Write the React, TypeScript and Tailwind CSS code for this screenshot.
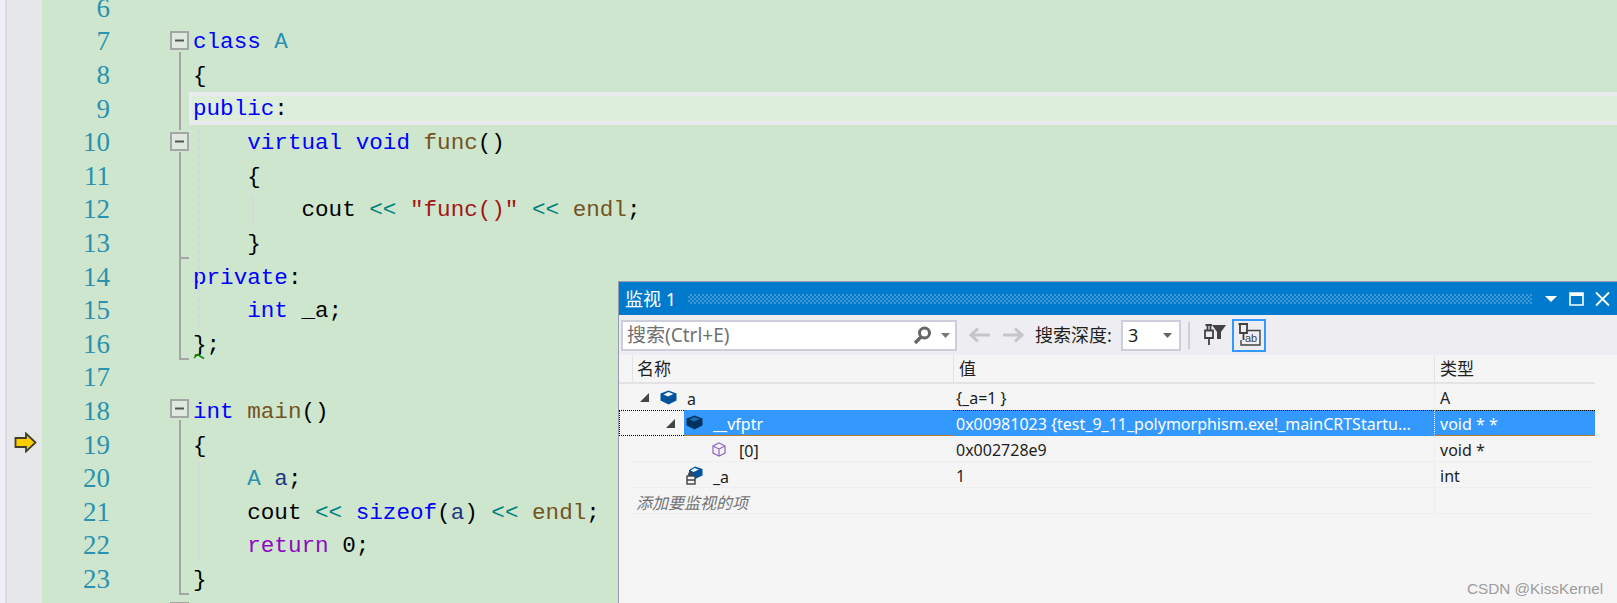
import React from "react";

const K = ({ children }: { children: React.ReactNode }) => <span className="text-[#0000ff]">{children}</span>;
const T = ({ children }: { children: React.ReactNode }) => <span className="text-[#2b91af]">{children}</span>;
const F = ({ children }: { children: React.ReactNode }) => <span className="text-[#74531f]">{children}</span>;
const O = ({ children }: { children: React.ReactNode }) => <span className="text-[#008080]">{children}</span>;
const V = ({ children }: { children: React.ReactNode }) => <span className="text-[#1f377f]">{children}</span>;

const lines: [number, React.ReactNode][] = [
  [6, ""],
  [7, <><K>class</K> <T>A</T></>],
  [8, "{"],
  [9, <><K>public</K>:</>],
  [10, <>    <K>virtual</K> <K>void</K> <F>func</F>()</>],
  [11, "    {"],
  [12, <>        cout <O>&lt;&lt;</O> <span className="text-[#a31515]">"func()"</span> <O>&lt;&lt;</O> <F>endl</F>;</>],
  [13, "    }"],
  [14, <><K>private</K>:</>],
  [15, <>    <K>int</K> _a;</>],
  [16, "};"],
  [17, ""],
  [18, <><K>int</K> <F>main</F>()</>],
  [19, "{"],
  [20, <>    <T>A</T> <V>a</V>;</>],
  [21, <>    cout <O>&lt;&lt;</O> <K>sizeof</K>(<V>a</V>) <O>&lt;&lt;</O> <F>endl</F>;</>],
  [22, <>    <span className="text-[#8f08c4]">return</span> 0;</>],
  [23, "}"],
  [24, <span className="text-[#008000]">// l    t</span>],
];

function FoldBox({ y }: { y: number }) {
  return (
    <g>
      <rect x={171} y={y} width={17} height={17} fill="#dfe9e0" stroke="#a5a5a5" strokeWidth={2} />
      <path d={`M175 ${y + 8.5}H184`} stroke="#555" strokeWidth={2} />
    </g>
  );
}

function Guides() {
  return (
    <svg className="absolute left-0 top-0" width={1617} height={603} fill="none">
      <path d="M180 52V130M180 152V359H189M180 258H189M180 420V594H189" stroke="#a5a5a5" strokeWidth={2} />
      <path d="M199 129V325M199 463V560M253 197V226" stroke="#d6d6e2" strokeWidth={2} strokeDasharray="5 3" />
      <path d="M194 358L197.5 354.5L204 358.5" stroke="#108a10" strokeWidth={1.6} />
      <FoldBox y={32} />
      <FoldBox y={133} />
      <FoldBox y={400} />
      <FoldBox y={603} />
    </svg>
  );
}

function Box({ dark }: { dark?: boolean }) {
  return (
    <svg width={17} height={15} viewBox="0 0 17 15" className="shrink-0">
      <path d="M8.5 0.5L16.5 3.5V10.5L8.5 14.5L0.5 10.5V3.5Z" fill={dark ? "#00335f" : "#00539c"} />
      <path d="M8.5 2L13.5 4L8 6.5L3.5 4.5Z" fill={dark ? "#1c6fb5" : "#f3f6fb"} />
    </svg>
  );
}

function LockBox() {
  return (
    <svg width={17} height={19} viewBox="0 0 17 19" className="block shrink-0">
      <path d="M9 0.5L16.5 3V9.5L8 13.5L3 11V4Z" fill="#00539c" />
      <path d="M8.5 2L13 3.6L7.5 6L4.5 4.5Z" fill="#f3f6fb" />
      <rect x={1} y={10} width={8} height={8} fill="#f5f5f5" stroke="#424242" strokeWidth={1.4} />
      <path d="M2.8 10V8.6a2.2 2.2 0 0 1 4.4 0V10M1 14H9" stroke="#424242" strokeWidth={1.4} fill="none" />
    </svg>
  );
}

function Cube() {
  return (
    <svg width={14} height={15} viewBox="0 0 14 15" fill="none" className="block shrink-0">
      <path d="M7 1L13 4V11L7 14L1 11V4ZM1 4L7 7L13 4M7 7V14" stroke="#9a6cbf" strokeWidth={1.3} />
    </svg>
  );
}

function Arrow({ className }: { className?: string }) {
  return (
    <svg width={9} height={9} viewBox="0 0 9 9" className={`shrink-0 ${className ?? ""}`}>
      <path d="M9 0V9H0Z" fill="#444" />
    </svg>
  );
}

function GridRow({
  name,
  value,
  type,
  selected,
  rule,
}: {
  name: React.ReactNode;
  value?: string;
  type?: string;
  selected?: boolean;
  rule?: boolean;
}) {
  return (
    <div className="relative flex h-[26px] w-[976px] items-center">
      {rule && <div className="absolute bottom-0 left-[13px] right-0 h-px bg-[#efeff0]" />}
      {selected ? (
        <>
          <div className="flex h-full w-[65px] items-center border-y border-l border-dotted border-black pl-[46px]">
            <Arrow />
          </div>
          <div className="flex h-full w-[269px] items-center gap-[10px] border-b border-dotted border-[#b8742e] bg-[#3399ff] pl-[2px] text-white">
            <Box dark />
            {name}
          </div>
        </>
      ) : (
        <div className="flex h-full w-[334px] items-center">{name}</div>
      )}
      <div
        className={`h-full w-[481px] truncate pl-[3px] ${selected ? "border-y border-dotted border-t-black border-b-[#b8742e] bg-[#3399ff] leading-[27px] text-white" : "leading-[29px]"}`}
      >
        {value}
      </div>
      <div
        className={`h-full w-[161px] border-l pl-[5px] ${selected ? "border-y border-dotted border-t-black border-b-[#b8742e] border-l-white bg-[#3399ff] leading-[27px] text-white" : "border-[#eeeeee] leading-[29px]"}`}
      >
        {type}
      </div>
    </div>
  );
}

function WatchPanel() {
  return (
    <div className="absolute left-[618px] top-[281px] flex h-[322px] w-[999px] flex-col border-l border-t border-[#9a9aae] bg-[#f5f5f5] font-['Noto_Sans','Noto_Sans_CJK_SC',sans-serif] text-[16px] text-[#1e1e1e]">
      <div className="flex h-[33px] items-center bg-[#007acc] pl-[6px] text-white">
        <span className="w-[63px] pt-[1px] text-[18px]">监视 1</span>
        <div className="h-[10px] w-[844px] bg-[repeating-conic-gradient(#4097d6_0_25%,#007acc_0_50%)] bg-[length:4px_4px]" />
        <svg width={84} height={20} viewBox="0 0 84 20" fill="none">
          <path d="M13 7H25L19 13Z" fill="#fff" />
          <path d="M38 4H51V16H38Z" stroke="#fff" strokeWidth={1.6} />
          <path d="M38 5.5H51" stroke="#fff" strokeWidth={3} />
          <path d="M64 3.5L77 16.5M77 3.5L64 16.5" stroke="#fff" strokeWidth={1.8} />
        </svg>
      </div>

      <div className="flex h-[40px] items-center bg-[#eeeef2] pl-[2px]">
        <div className="flex h-[31px] w-[336px] items-center justify-between border-2 border-[#cccedb] bg-white pl-[4px] pr-[5px] text-[19px] text-[#717171]">
          <span>搜索(Ctrl+E)</span>
          <span className="flex items-center gap-[9px]">
            <svg width={19} height={19} viewBox="0 0 19 19" fill="none">
              <circle cx={11.5} cy={7} r={5} stroke="#666" strokeWidth={3} />
              <path d="M8 11L2 17" stroke="#666" strokeWidth={3.4} />
            </svg>
            <svg width={9} height={5} viewBox="0 0 9 5">
              <path d="M0 0H9L4.5 5Z" fill="#777" />
            </svg>
          </span>
        </div>
        <svg width={55} height={16} viewBox="0 0 55 16" fill="none" className="ml-[12px]">
          <path d="M21 8H2M9 1.5L2 8L9 14.5" stroke="#c6c6c9" strokeWidth={3} />
          <path d="M34 8H53M46 1.5L53 8L46 14.5" stroke="#c6c6c9" strokeWidth={3} />
        </svg>
        <span className="ml-[11px] w-[86px] text-[18px]">搜索深度:</span>
        <div className="flex h-[31px] w-[60px] items-center justify-between border-2 border-[#cccedb] bg-white pl-[5px] pr-[7px] text-[18px]">
          <span>3</span>
          <svg width={9} height={5} viewBox="0 0 9 5">
            <path d="M0 0H9L4.5 5Z" fill="#666" />
          </svg>
        </div>
        <div className="ml-[7px] h-[27px] w-[2px] bg-[#cccedb]" />
        <svg width={24} height={24} viewBox="0 0 24 24" fill="none" className="ml-[12px]">
          <path d="M3 7.5H11V15H3ZM5.5 8V2M8.5 8V2M7 15V22M3.5 2H10" stroke="#424242" strokeWidth={1.8} />
          <path d="M10 2H24L19 9V16H15V9Z" fill="#424242" />
        </svg>
        <div className="ml-[6px] flex h-[33px] w-[34px] items-center justify-center border-2 border-[#3399ff]">
          <svg width={24} height={26} viewBox="0 0 24 26" fill="none">
            <path d="M3 2H10V11H3ZM6.5 11V18M1.5 2H11" stroke="#424242" strokeWidth={1.8} />
            <path d="M9 8.5H23V23H4V18" stroke="#424242" strokeWidth={1.4} />
            <text x={8} y={20} fontSize={11} fill="#424242" fontFamily="Liberation Sans">ab</text>
          </svg>
        </div>
      </div>

      <div className="flex h-[29px] w-[976px] shrink-0 items-center border-b-2 border-[#e3e3e6] text-[17px]">
        <div className="h-full w-[13px]" />
        <div className="h-full w-[321px] border-l border-[#e3e3e6] pl-[4px] leading-[27px]">名称</div>
        <div className="h-full w-[481px] border-l border-[#e3e3e6] pl-[5px] leading-[27px]">值</div>
        <div className="h-full w-[161px] border-l border-[#e3e3e6] pl-[5px] leading-[27px]">类型</div>
      </div>

      <GridRow
        name={
          <>
            <Arrow className="ml-[21px]" />
            <span className="ml-[11px]"><Box /></span>
            <span className="ml-[10px] pt-[3px]">a</span>
          </>
        }
        value="{_a=1 }"
        type="A"
      />
      <GridRow selected name={<span className="pt-[3px]">__vfptr</span>} value="0x00981023 {test_9_11_polymorphism.exe!_mainCRTStartu..." type="void * *" />
      <GridRow
        rule
        name={
          <>
            <span className="ml-[93px]"><Cube /></span>
            <span className="ml-[13px] pt-[3px]">[0]</span>
          </>
        }
        value="0x002728e9"
        type="void *"
      />
      <GridRow
        rule
        name={
          <>
            <span className="ml-[67px]"><LockBox /></span>
            <span className="ml-[10px] pt-[3px]">_a</span>
          </>
        }
        value="1"
        type="int"
      />
      <GridRow rule name={<span className="ml-[17px] pt-[3px] italic text-[#717171]">添加要监视的项</span>} />

      <div className="absolute left-[848px] top-[296px] font-['Liberation_Sans',sans-serif] text-[15.3px] text-[#9c9c9c]">
        CSDN @KissKernel
      </div>
    </div>
  );
}

export default function App() {
  return (
    <div className="relative flex h-[603px] w-[1617px] overflow-hidden">
      <div className="w-[5px] bg-[#f0eff6]" />
      <div className="w-[2px] bg-[#dcdce6]" />
      <div className="w-[35px] bg-[#e6e7e8] pl-[7px] pt-[432px]">
        <svg width={23} height={21} viewBox="0 0 23 21" className="block">
          <path d="M1.5 6H12V1.5L21.5 10.5L12 19.5V15H1.5Z" fill="#ffcc00" stroke="#3f3f2a" strokeWidth={1.8} />
        </svg>
      </div>
      <div className="flex-1 bg-[#cde6cd] font-['Liberation_Mono',monospace] text-[22.6px] text-black">
        <div className="-mt-[9px]">
          {lines.map(([n, code]) => (
            <div key={n} className="flex h-[33.6px] items-center">
              <div className="w-[68px] text-right font-['Liberation_Serif',serif] text-[27px] leading-[32px] text-[#2b91af]">{n}</div>
              <div className="w-[79px]" />
              {n === 9 ? (
                <div className="flex h-full flex-1 items-center whitespace-pre border-y-[4px] border-l-[3px] border-[#e9ebf1] bg-[#ddeedd] pl-[1px] pt-[2px]">
                  {code}
                </div>
              ) : (
                <div className="flex-1 whitespace-pre pl-[4px] pt-[4px]">{code}</div>
              )}
            </div>
          ))}
        </div>
      </div>
      <Guides />
      <WatchPanel />
    </div>
  );
}
